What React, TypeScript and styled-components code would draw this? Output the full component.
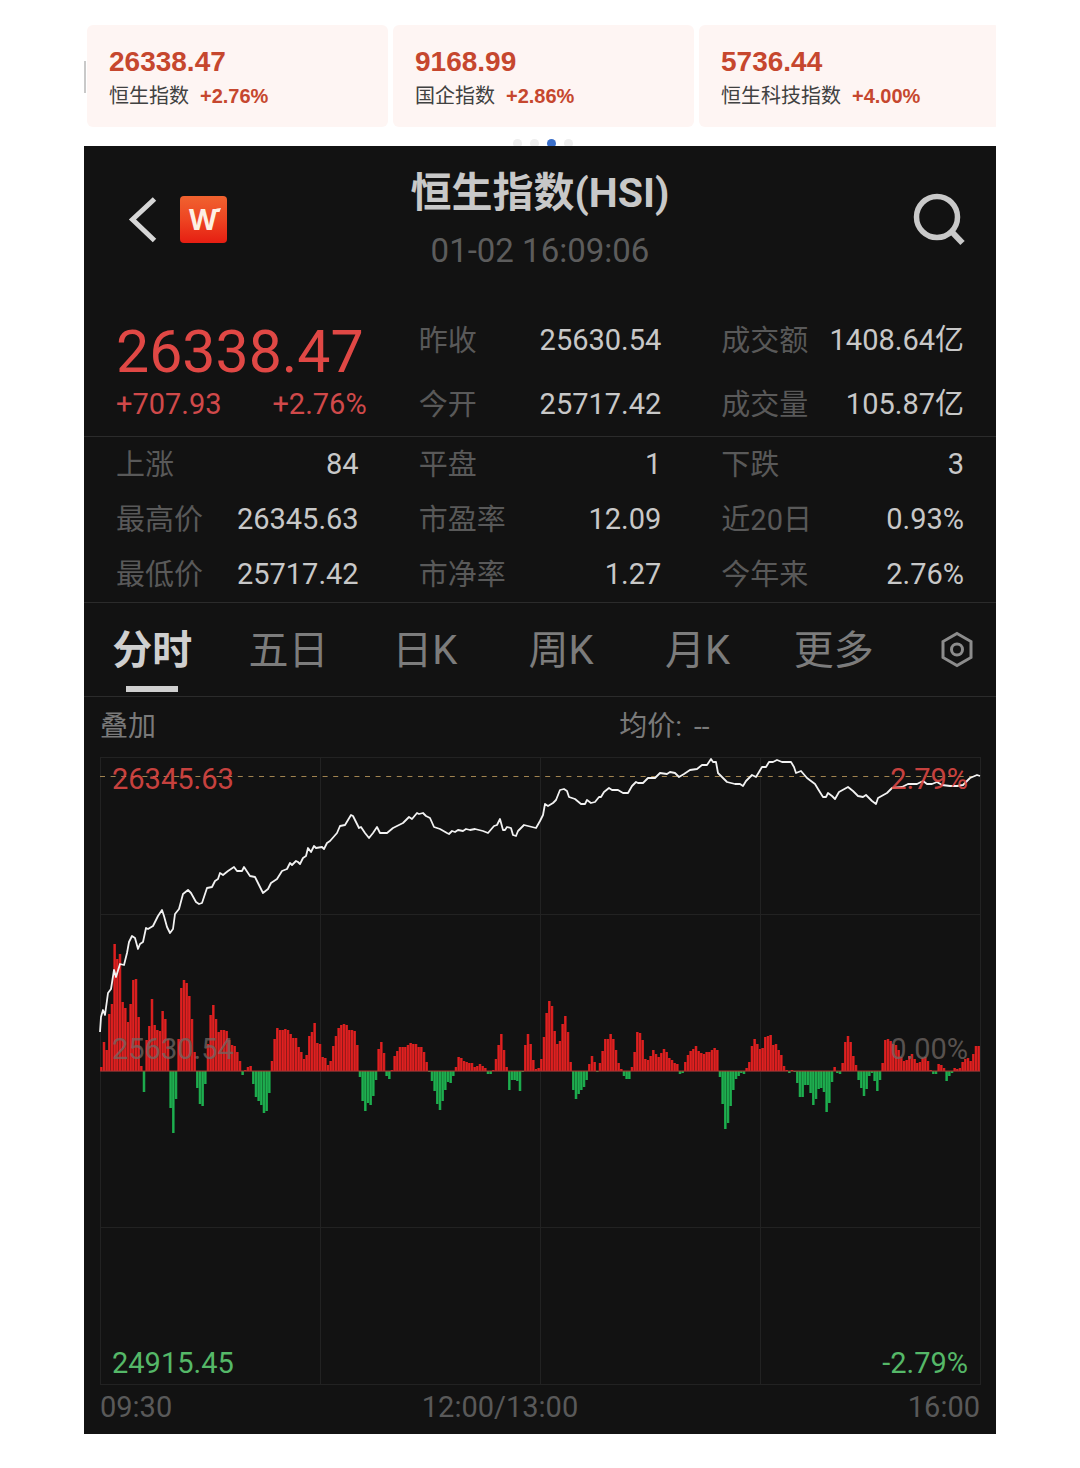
import React from "react";
import styled, { createGlobalStyle } from "styled-components";

const GlobalStyle = createGlobalStyle`
  *, *::before, *::after { box-sizing: border-box; }
  body {
    margin: 0;
    background: #ffffff;
    font-family: Roboto, "Noto Sans CJK SC", sans-serif;
  }
  button { border: 0; padding: 0; background: none; color: inherit; font: inherit; cursor: pointer; }
  h1, p, dl, dd { margin: 0; }
`;

const Page = styled.main`
  padding: 25px 84px 34px;
`;

/* ---------- index cards ---------- */

const Strip = styled.section`
  position: relative;
  overflow: hidden;
`;

const ScrollNub = styled.button`
  && {
    position: absolute;
    left: 0;
    top: 36px;
    width: 2px;
    height: 32px;
    background: #c9c9c9;
  }
`;

const Cards = styled.div`
  display: flex;
  gap: 5px;
  margin-right: -4px;
  padding-left: 3px;
`;

const Card = styled.article`
  flex: 1;
  padding: 20px 22px 14px;
  border-radius: 6px;
  background: #fef5f3;
  font-family: "Liberation Sans", "Noto Sans CJK SC", sans-serif;
  line-height: 34px;
  white-space: nowrap;
`;

const CardValue = styled.p`
  color: #c6472e;
  font-size: 28px;
  font-weight: 700;
`;

const CardLine = styled.p`
  display: flex;
  gap: 11px;
  color: #414141;
  font-size: 20px;
`;

const CardChange = styled.span`
  color: #c6472e;
  font-weight: 700;
`;

const Dots = styled.div`
  display: flex;
  justify-content: center;
  gap: 8px;
  height: 19px;
  padding: 12px 0 0 5px;
  overflow: hidden;
`;

const Dot = styled.span<{ $active: boolean }>`
  flex: none;
  width: 9px;
  height: 9px;
  border-radius: 50%;
  background: ${(p) => (p.$active ? "#3a6fca" : "#eeeeee")};
`;

/* ---------- quote panel ---------- */

const Panel = styled.section`
  background: #121212;
  color: #c8c8c8;
`;

const Header = styled.header`
  display: grid;
  grid-template-columns: 1fr auto 1fr;
  align-items: center;
  padding: 20px 30px 35px;
`;

const HeaderLeft = styled.div`
  display: flex;
  align-items: center;
  gap: 22px;
  padding-left: 14px;
`;

const IconButton = styled.button`
  display: flex;
`;

const SearchButton = styled(IconButton)`
  justify-self: end;
`;

const TitleBlock = styled.div`
  display: grid;
  gap: 9px;
  text-align: center;
`;

const Title = styled.h1`
  font-size: 41px;
  font-weight: 700;
  line-height: 54px;
`;

const Time = styled.p`
  color: #5c5c5c;
  font-size: 33px;
  line-height: 44px;
`;

const Columns = styled.div`
  display: grid;
  grid-template-columns: repeat(3, minmax(0, 1fr));
  column-gap: 60px;
  padding: 0 32px;
  border-bottom: 1px solid #2b2b2b;
`;

const PriceBlock = styled.div`
  padding-top: 14px;
  color: #e04845;
`;

const Price = styled.p`
  font-size: 59px;
  line-height: 60px;
`;

const Change = styled.p`
  display: flex;
  justify-content: space-between;
  margin-right: -8px;
  color: #d0494a;
  font-size: 29px;
  line-height: 44px;
`;

const StatList = styled.dl<{ $row: number }>`
  display: grid;
  grid-auto-rows: ${(p) => p.$row}px;
  line-height: ${(p) => p.$row}px;
`;

const Stat = styled.div`
  display: flex;
  justify-content: space-between;
  white-space: nowrap;
`;

const StatName = styled.dt`
  padding-top: 1px;
  color: #595959;
  font-size: 29px;
`;

const StatValue = styled.dd`
  font-size: 29px;
`;

/* ---------- period tabs ---------- */

const Tabs = styled.nav`
  display: flex;
  height: 94px;
  border-bottom: 1px solid #2b2b2b;
`;

const Tab = styled.button<{ $active: boolean }>`
  && {
    display: flex;
    flex: 1;
    flex-direction: column;
    align-items: center;
    padding-top: 18px;
    color: ${(p) => (p.$active ? "#cfcfcf" : "#7c7c7c")};
    font-size: 40px;
    font-weight: ${(p) => (p.$active ? 700 : 400)};
    line-height: 60px;
  }
  &::after {
    content: "";
    width: 52px;
    height: 6px;
    margin-top: 5px;
    background: ${(p) => (p.$active ? "#cfcfcf" : "transparent")};
  }
`;

const SettingsButton = styled.button`
  && {
    display: flex;
    align-items: center;
    justify-content: center;
    width: 94px;
    padding-left: 16px;
  }
`;

/* ---------- chart ---------- */

const ChartInfo = styled.div`
  display: grid;
  grid-template-columns: 59fr 41fr;
  padding: 0 16px;
  color: #7a7a7a;
  font-size: 28px;
  line-height: 60px;
`;

const OverlayButton = styled.button`
  justify-self: start;
`;

const Average = styled.span`
  display: flex;
  gap: 12px;
`;

const ChartArea = styled.div`
  position: relative;
  margin: 0 16px;
`;

const ChartSvg = styled.svg`
  display: block;
  width: 100%;
  height: 628px;
  overflow: visible;
`;

const Scale = styled.div`
  position: absolute;
  inset: 0;
  display: grid;
  grid-template-rows: 1fr 1fr;
  padding: 0 12px;
  font-size: 29px;
  line-height: 44px;
`;

const ScaleHalf = styled.div`
  display: flex;
  flex-direction: column;
  justify-content: space-between;

  &:last-child { justify-content: flex-end; }
`;

const ScaleRow = styled.div<{ $color: string }>`
  display: flex;
  justify-content: space-between;
  color: ${(p) => p.$color};
`;

const TimeAxis = styled.div`
  position: relative;
  display: flex;
  justify-content: space-between;
  margin: 0 16px;
  padding-bottom: 5px;
  color: #595959;
  font-size: 29px;
  line-height: 44px;
`;

const MidTime = styled.span`
  position: absolute;
  transform: translateX(-50%);
`;

/* ---------- data ---------- */

const indexes = [
  { name: "恒生指数", value: "26338.47", change: "+2.76%" },
  { name: "国企指数", value: "9168.99", change: "+2.86%" },
  { name: "恒生科技指数", value: "5736.44", change: "+4.00%" },
];

type Pair = [string, string];

const summary: Pair[][] = [
  [["昨收", "25630.54"], ["今开", "25717.42"]],
  [["成交额", "1408.64亿"], ["成交量", "105.87亿"]],
];

const stats: Pair[][] = [
  [["上涨", "84"], ["最高价", "26345.63"], ["最低价", "25717.42"]],
  [["平盘", "1"], ["市盈率", "12.09"], ["市净率", "1.27"]],
  [["下跌", "3"], ["近20日", "0.93%"], ["今年来", "2.76%"]],
];

const periods = ["分时", "五日", "日K", "周K", "月K", "更多"];

const MINUTES = 330;
const NOON = 150;
const BASE = 314;

/* one bar per trading minute */
const momentum = [
  4, 29, 21, 57, 67, 127, 112, 117, 69, 63, 49, 67, 91, 92, 54, 5, -21, 31, 45, 72,
  46, 41, 40, 60, 52, 32, -37, -62, -28, 32, 83, 91, 88, 75, 52, 19, -17, -33, -35, -13,
  27, 56, 66, 52, 39, 41, 41, 40, 31, 26, 25, 19, 10, -4, 1, 4, 5, -13, -26, -30,
  -34, -42, -40, -22, 10, 32, 43, 41, 41, 42, 41, 37, 33, 33, 24, 19, 12, 16, 35, 39,
  48, 28, 27, 14, 13, 6, 10, 25, 35, 43, 46, 47, 46, 41, 41, 40, 26, -6, -30, -40,
  -32, -34, -25, -9, 22, 29, 18, -5, -8, 1, 15, 20, 24, 24, 24, 26, 28, 27, 27, 24,
  24, 19, 9, -1, -10, -20, -33, -39, -30, -19, -11, -12, -5, 4, 14, 13, 10, 9, 8, 8,
  4, 5, 7, 5, 3, -3, -3, 1, 12, 26, 37, 21, 4, -19, -9, -9, -10, -20, -1, 26,
  37, 27, 11, 2, 3, 12, 34, 58, 70, 65, 40, 27, 30, 47, 55, 39, 9, -19, -28, -23,
  -19, -16, -9, 7, 15, 9, -1, 8, 20, 32, 32, 37, 32, 21, 8, 2, -5, -8, -8, 4,
  19, 39, 38, 31, 12, 11, 15, 21, 17, 14, 18, 22, 19, 13, 11, 8, 7, -3, -2, 9,
  16, 20, 22, 25, 20, 18, 17, 19, 19, 21, 23, 21, -6, -33, -58, -52, -35, -19, -8, -5,
  -2, -3, 3, 9, 25, 32, 27, 22, 23, 34, 35, 36, 26, 27, 21, 16, 5, 1, -2, 1,
  -1, -12, -26, -26, -14, -14, -22, -34, -28, -18, -17, -21, -41, -32, -11, 4, -2, -3, 8, 29,
  35, 29, 15, 6, -9, -17, -25, -18, -5, -2, -10, -20, -9, 8, 31, 32, 30, 27, 26, 21,
  14, 10, 11, 15, 17, 12, 8, 9, 13, 14, 10, 1, -3, -3, 7, 6, 3, -10, -5, -2,
  3, 2, 3, 9, 12, 13, 10, 17, 25, 25,
];

const pricePoints =
  "0,275 1,260 3,253 5,258 8,236 11,232 14,213 16,220 20,207 24,208 27,196 29,185 32,179 35,181 38,192 40,187 43,185 46,171 48,172 53,169 58,159 62,153 64,159 67,170 70,176 73,172 75,157 79,152 83,137 88,133 91,136 96,145 99,147 102,146 107,131 112,130 115,124 118,122 120,116 123,118 128,114 131,112 134,110 137,114 142,114 144,110 150,119 155,120 158,126 163,136 168,132 171,126 177,122 182,114 187,112 190,106 192,108 196,104 198,105 200,107 203,101 206,99 208,91 211,95 214,89 216,91 222,90 224,92 227,86 230,84 237,76 240,69 245,68 251,58 253,59 259,71 261,70 265,76 269,81 273,76 277,70 280,76 287,76 293,71 303,66 309,60 312,62 317,56 319,57 323,56 326,59 330,61 334,70 340,72 347,76 349,77 352,74 355,75 358,73 363,74 366,72 370,73 375,72 383,74 388,76 394,69 397,68 400,62 403,73 405,73 407,70 411,71 413,78 416,79 418,74 424,68 432,70 436,71 440,64 443,58 445,47 448,49 453,46 456,43 460,33 464,32 467,34 469,40 475,42 481,47 485,47 487,43 491,46 495,45 499,40 501,40 504,35 509,31 512,33 518,33 523,36 528,36 532,29 536,25 538,26 543,26 548,21 555,21 560,16 567,17 570,15 575,16 579,20 584,17 590,13 597,12 602,8 607,8 611,2 613,5 616,5 618,16 623,21 627,25 635,27 640,27 643,29 646,24 652,18 656,20 662,10 666,10 669,5 673,5 677,3 682,5 691,5 694,10 696,16 701,14 707,21 715,27 718,32 723,40 726,40 728,36 732,39 735,42 739,35 748,30 753,34 758,39 763,40 766,38 772,44 776,47 778,41 787,36 792,31 802,30 808,27 817,27 823,24 827,27 832,27 837,25 842,28 850,29 857,29 863,28 870,21 877,18 880,19";

/* ---------- drawings ---------- */

const BackIcon = () => (
  <svg width="30" height="48" viewBox="0 0 30 48" fill="none" aria-hidden="true">
    <path d="M26.500 3 4.500 23.500l22 21" stroke="#d6d6d6" strokeWidth="5" />
  </svg>
);

const Logo = () => (
  <svg width="47" height="47" viewBox="0 0 47 47" role="img" aria-label="W">
    <defs>
      <linearGradient id="logo-fill" x1="0" y1="0" x2="0" y2="1">
        <stop offset="0" stopColor="#f0622f" />
        <stop offset="0.500" stopColor="#ee4522" />
        <stop offset="1" stopColor="#e61e12" />
      </linearGradient>
    </defs>
    <rect width="47" height="47" rx="4" fill="url(#logo-fill)" />
    <text
      x="23"
      y="34"
      textAnchor="middle"
      fontFamily="Open Sans, sans-serif"
      fontSize="29"
      fontWeight="700"
      fill="#fdf0e4"
    >
      W
    </text>
    <path d="M34 13.500q3-1.500 7-1.500l-1.500 4h-5z" fill="#fdf0e4" />
  </svg>
);

const SearchIcon = () => (
  <svg width="54" height="54" viewBox="0 0 54 54" fill="none" stroke="#c9c9c9" aria-hidden="true">
    <circle cx="25" cy="24" r="20.500" strokeWidth="5.500" />
    <path d="M39.500 38.500 50.500 50" strokeWidth="6" />
  </svg>
);

const SettingsIcon = () => (
  <svg width="34" height="38" viewBox="0 0 34 38" fill="none" stroke="#8c8c8c" strokeWidth="3" aria-hidden="true">
    <path d="M17 2.500 31 10.500v16L17 34.500 3 26.500v-16z" />
    <circle cx="17" cy="18.500" r="5.500" />
  </svg>
);

function IntradayChart() {
  const step = 880 / MINUTES;
  return (
    <ChartSvg viewBox="0 0 880 628" preserveAspectRatio="none" role="img" aria-label="分时">
      <g stroke="#222222" strokeWidth="1" shapeRendering="crispEdges">
        {[0, 220, 440, 660, 880].map((x) => (
          <line key={x} x1={x} x2={x} y1="0" y2="628" />
        ))}
        {[0, 157, 314, 470, 627].map((y) => (
          <line key={y} x1="0" x2="880" y1={y} y2={y} />
        ))}
      </g>
      <line x1="0" x2="880" y1="19.500" y2="19.500" stroke="#a08350" strokeDasharray="5 5.600" />
      {momentum.map((v, i) => (
        <g key={i}>
          <rect
            x={i * step}
            y={v > 0 ? BASE - v : BASE}
            width={step}
            height={Math.abs(v)}
            fill={v > 0 ? "#a51c1c" : "#168a3c"}
          />
          <rect
            x={i * step + 0.4}
            y={v > 0 ? BASE - v : BASE}
            width={step - 0.9}
            height={Math.abs(v)}
            fill={v > 0 ? "#e02020" : "#1fae50"}
          />
        </g>
      ))}
      <line x1="0" x2="880" y1={BASE} y2={BASE} stroke="#b03030" />
      <polyline points={pricePoints} fill="none" stroke="#f2f2f2" strokeWidth="1.800" strokeLinejoin="round" />
    </ChartSvg>
  );
}

function Stats({ items, row }: { items: Pair[]; row: number }) {
  return (
    <StatList $row={row}>
      {items.map(([name, value]) => (
        <Stat key={name}>
          <StatName>{name}</StatName>
          <StatValue>{value}</StatValue>
        </Stat>
      ))}
    </StatList>
  );
}

export default function App() {
  const [period, setPeriod] = React.useState("分时");
  return (
    <>
      <GlobalStyle />
      <Page>
        <Strip>
          <ScrollNub aria-label="上一页" />
          <Cards>
            {indexes.map((item) => (
              <Card key={item.name}>
                <CardValue>{item.value}</CardValue>
                <CardLine>
                  {item.name}
                  <CardChange>{item.change}</CardChange>
                </CardLine>
              </Card>
            ))}
          </Cards>
          <Dots>
            {[0, 1, 2, 3].map((i) => (
              <Dot key={i} $active={i === 2} />
            ))}
          </Dots>
        </Strip>

        <Panel>
          <Header>
            <HeaderLeft>
              <IconButton aria-label="返回">
                <BackIcon />
              </IconButton>
              <Logo />
            </HeaderLeft>
            <TitleBlock>
              <Title>恒生指数(HSI)</Title>
              <Time>01-02 16:09:06</Time>
            </TitleBlock>
            <SearchButton aria-label="搜索">
              <SearchIcon />
            </SearchButton>
          </Header>

          <Columns>
            <PriceBlock>
              <Price>26338.47</Price>
              <Change>
                <span>+707.93</span>
                <span>+2.76%</span>
              </Change>
            </PriceBlock>
            {summary.map((items, i) => (
              <Stats key={i} items={items} row={64} />
            ))}
          </Columns>

          <Columns>
            {stats.map((items, i) => (
              <Stats key={i} items={items} row={55} />
            ))}
          </Columns>

          <Tabs>
            {periods.map((name) => (
              <Tab key={name} $active={name === period} onClick={() => setPeriod(name)}>
                {name}
              </Tab>
            ))}
            <SettingsButton aria-label="设置">
              <SettingsIcon />
            </SettingsButton>
          </Tabs>

          <ChartInfo>
            <OverlayButton>叠加</OverlayButton>
            <Average>
              <span>均价:</span>
              <span>--</span>
            </Average>
          </ChartInfo>

          <ChartArea>
            <IntradayChart />
            <Scale>
              <ScaleHalf>
                <ScaleRow $color="rgba(224, 72, 69, 0.9)">
                  <span>26345.63</span>
                  <span>2.79%</span>
                </ScaleRow>
                <ScaleRow $color="rgba(112, 104, 100, 0.75)">
                  <span>25630.54</span>
                  <span>0.00%</span>
                </ScaleRow>
              </ScaleHalf>
              <ScaleHalf>
                <ScaleRow $color="#55b868">
                  <span>24915.45</span>
                  <span>-2.79%</span>
                </ScaleRow>
              </ScaleHalf>
            </Scale>
          </ChartArea>

          <TimeAxis>
            <span>09:30</span>
            <MidTime style={{ left: `${(NOON / MINUTES) * 100}%` }}>12:00/13:00</MidTime>
            <span>16:00</span>
          </TimeAxis>
        </Panel>
      </Page>
    </>
  );
}
